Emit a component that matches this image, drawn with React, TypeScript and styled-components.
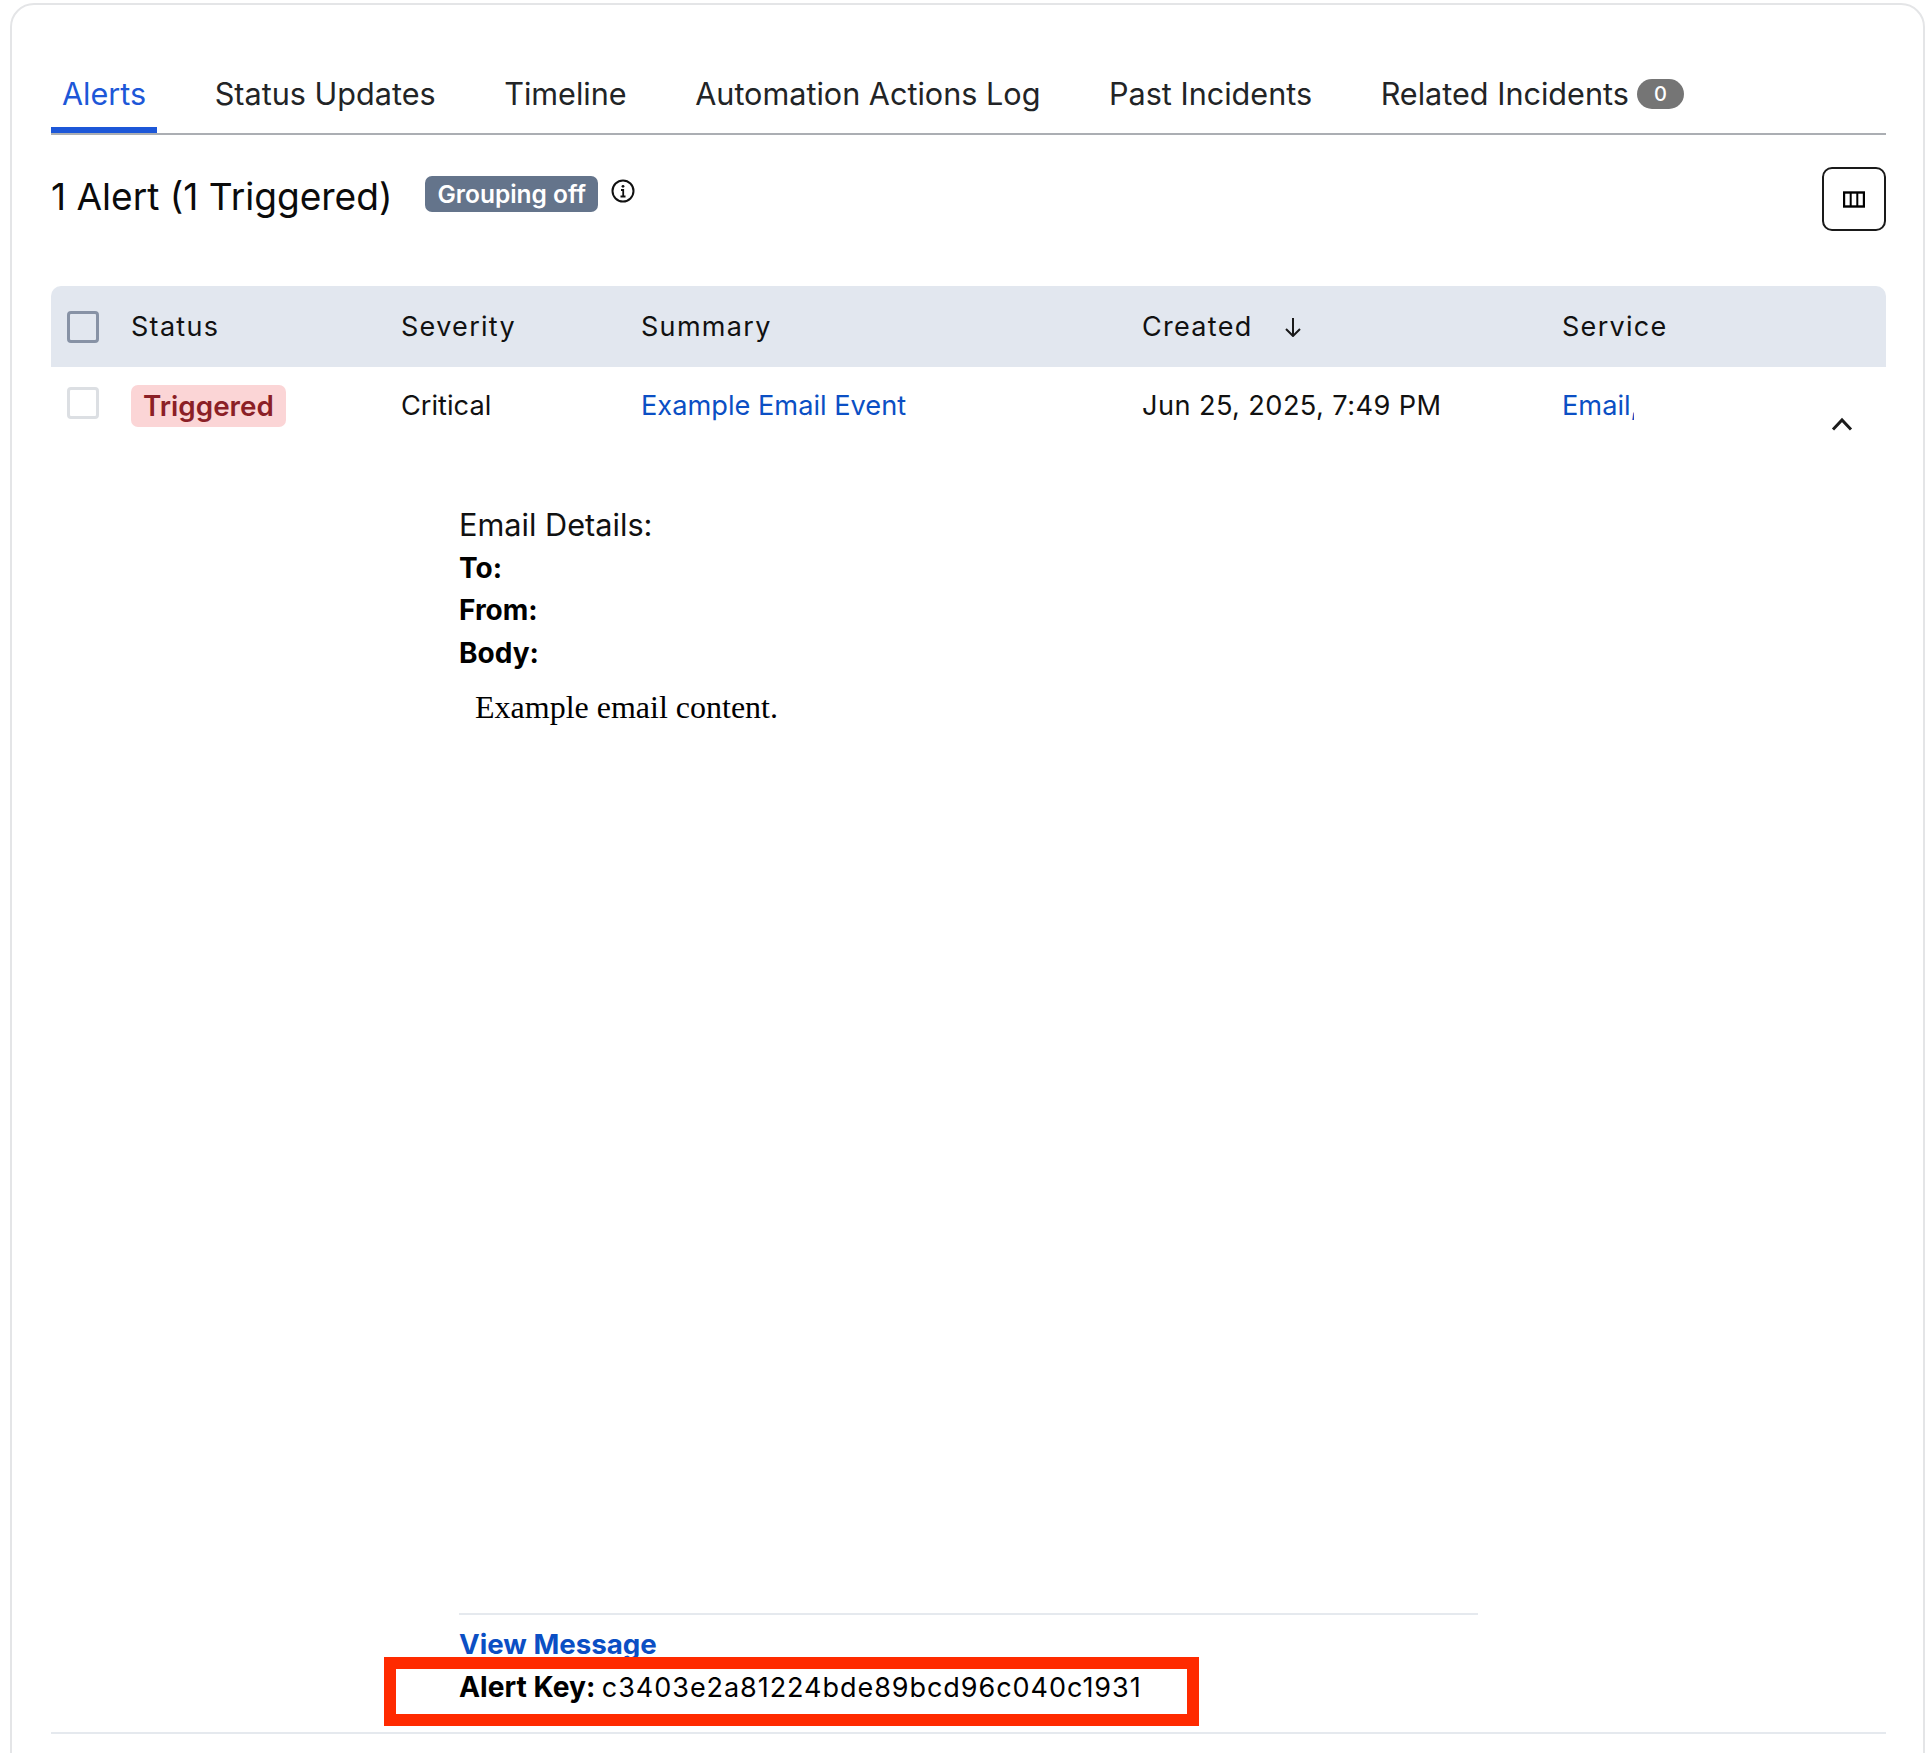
import styled, { createGlobalStyle } from 'styled-components'

const GlobalStyle = createGlobalStyle`
  html, body {
    margin: 0;
    padding: 0;
    background: #ffffff;
    overflow: hidden;
  }
  body {
    font-family: Inter, "Liberation Sans", sans-serif;
    color: #111111;
  }
`

const COLUMNS = '80px 270px 240px 501px 420px 1fr'

const Page = styled.div`
  position: relative;
  height: 1753px;
  padding: 3px 2px 0 10px;
  box-sizing: border-box;
  overflow: hidden;
`

const Card = styled.section`
  box-sizing: border-box;
  height: 1800px;
  padding: 0 37px 0 39px;
  border: 2px solid #e4e5e7;
  border-radius: 24px 24px 0 0;
  background: #ffffff;
`

const TabBar = styled.nav`
  display: flex;
  align-items: flex-end;
  gap: 46.5px;
  height: 128px;
  border-bottom: 2px solid #abaeb3;
`

const Tab = styled.a<{ $active?: boolean }>`
  display: flex;
  align-items: center;
  gap: 8px;
  padding: 0 11px 16px;
  font-size: 30.6px;
  line-height: 34px;
  white-space: nowrap;
  color: ${(p) => (p.$active ? '#1d57d8' : '#222426')};
  border-bottom: ${(p) => (p.$active ? '6px solid #1d57d8' : '6px solid transparent')};
`

const CountBadge = styled.span`
  display: inline-flex;
  align-items: center;
  justify-content: center;
  width: 47px;
  height: 30px;
  border-radius: 15px;
  background: #757575;
  color: #ffffff;
  font-size: 20px;
  font-weight: 500;
`

const TitleRow = styled.div`
  display: flex;
  align-items: flex-start;
  margin-top: 32px;
  height: 63px;
`

const Title = styled.h2`
  margin: 8px 0 0;
  font-size: 37.1px;
  line-height: 44px;
  font-weight: 400;
  color: #0b0b0b;
`

const GroupingBadge = styled.span`
  margin: 9px 0 0 33px;
  padding: 0 12px;
  height: 36px;
  border-radius: 7px;
  background: #64748b;
  color: #ffffff;
  font-size: 24.5px;
  line-height: 36px;
  font-weight: 600;
`

const InfoButton = styled.span`
  display: block;
  margin: 12px 0 0 13px;
  width: 24px;
  height: 24px;
  color: #111111;
`

const ColumnsButton = styled.button`
  margin-left: auto;
  width: 64px;
  height: 64px;
  padding: 0;
  display: flex;
  align-items: center;
  justify-content: center;
  background: #ffffff;
  border: 2px solid #1a1a1a;
  border-radius: 10px;
`

const TableHead = styled.div`
  display: grid;
  grid-template-columns: ${COLUMNS};
  align-items: center;
  margin-top: 56px;
  height: 81px;
  background: #e2e7ef;
  border-radius: 10px 10px 0 0;
`

const HeadCell = styled.div`
  display: flex;
  align-items: center;
  gap: 30px;
  font-size: 27px;
  line-height: 34px;
  letter-spacing: 1.3px;
  color: #111111;
`

const CheckCell = styled.div<{ $row?: boolean }>`
  padding-left: 16px;
  padding-top: ${(p) => (p.$row ? '2px' : '0')};
`

const Checkbox = styled.span<{ $muted?: boolean }>`
  display: block;
  box-sizing: border-box;
  width: 32px;
  height: 32px;
  border-radius: 4px;
  border: 3px solid ${(p) => (p.$muted ? '#dcdfe3' : '#8792a5')};
  background-color: ${(p) => (p.$muted ? '#ffffff' : 'transparent')};
`

const TableRow = styled.div`
  display: grid;
  grid-template-columns: ${COLUMNS};
  align-items: start;
  height: 42px;
  padding-top: 18px;
`

const BodyCell = styled.div<{ $spaced?: boolean }>`
  font-size: 27.2px;
  line-height: 42px;
  letter-spacing: ${(p) => (p.$spaced ? '0.4px' : '0')};
  color: #111111;
`

const StatusBadge = styled.span`
  display: inline-block;
  padding: 0 12px;
  height: 42px;
  border-radius: 7px;
  background: #fbd5d6;
  color: #8b1f26;
  font-size: 27.8px;
  line-height: 42px;
  font-weight: 600;
`

const LinkText = styled.a`
  color: #0b4fc4;
  font-size: 27.2px;
  line-height: 42px;
`

const ServiceCell = styled.div`
  display: flex;
  font-size: 27.2px;
  line-height: 42px;
`

const ClippedComma = styled.span`
  display: inline-block;
  width: 3px;
  overflow: hidden;
  color: #0b4fc4;
`

const Chevron = styled.span`
  display: flex;
  margin-left: auto;
  margin-right: 33px;
  margin-top: 32px;
  width: 22px;
  height: 14px;
  color: #1c1c1c;
`

const Details = styled.div`
  margin-left: 408px;
  width: 1019px;
`

const DetailLines = styled.div`
  height: 1188px;
  padding-top: 77px;
  box-sizing: border-box;
  border-bottom: 2px solid #e5e9ee;
`

const DetailsHeading = styled.div`
  font-size: 30.7px;
  line-height: 42.5px;
  color: #111111;
`

const DetailLabel = styled.div`
  font-size: 28px;
  line-height: 42.5px;
  font-weight: 700;
  color: #000000;
`

const EmailBody = styled.div`
  margin: 12px 0 0 16px;
  font-family: "Liberation Serif", "Times New Roman", serif;
  font-size: 32px;
  line-height: 42px;
  color: #000000;
`

const ViewLink = styled.a`
  display: block;
  margin-top: 11px;
  font-size: 27.7px;
  line-height: 36px;
  font-weight: 700;
  color: #0b4fc4;
`

const AlertKey = styled.div`
  margin-top: 4px;
  font-size: 27px;
  line-height: 42px;
  letter-spacing: 0.95px;
  color: #000000;
  b {
    margin-right: -2px;
    font-size: 28.2px;
    font-weight: 700;
    letter-spacing: 0;
  }
`

const RowEnd = styled.div`
  margin-top: 23px;
  border-top: 2px solid #e5e9ee;
`

const RedBox = styled.div`
  position: absolute;
  left: 384px;
  top: 1657px;
  width: 815px;
  height: 69px;
  box-sizing: border-box;
  border: 12px solid #ff2a00;
`

const InfoIcon = () => (
  <svg viewBox="0 0 24 24" width="24" height="24" fill="none" stroke="currentColor" strokeWidth="2">
    <circle cx="12" cy="12" r="10.5" />
    <path d="M10 11h2.2v6.5M9.5 17.5h5" strokeWidth="1.8" />
    <circle cx="12" cy="7.3" r="1.4" fill="currentColor" stroke="none" />
  </svg>
)

const ColumnsIcon = () => (
  <svg viewBox="0 0 22 17" width="22" height="17" fill="none" stroke="#000000">
    <rect x="1" y="1.5" width="20" height="14" strokeWidth="2.4" />
    <path d="M7.7 1.5v14M14.3 1.5v14" strokeWidth="2" />
  </svg>
)

const SortArrow = () => (
  <svg viewBox="0 0 20 20" width="20" height="20" fill="none" stroke="#1a1a1a" strokeWidth="2">
    <path d="M10 1v18M3 12l7 7 7-7" />
  </svg>
)

const ChevronUp = () => (
  <svg viewBox="0 0 22 14" width="22" height="14" fill="none" stroke="currentColor" strokeWidth="3">
    <path d="M2 12.5L11 3l9 9.5" />
  </svg>
)

export default function App() {
  return (
    <Page>
      <GlobalStyle />
      <Card>
        <TabBar>
          <Tab $active>Alerts</Tab>
          <Tab>Status Updates</Tab>
          <Tab>Timeline</Tab>
          <Tab>Automation Actions Log</Tab>
          <Tab>Past Incidents</Tab>
          <Tab>
            Related Incidents
            <CountBadge>0</CountBadge>
          </Tab>
        </TabBar>

        <TitleRow>
          <Title>1 Alert (1 Triggered)</Title>
          <GroupingBadge>Grouping off</GroupingBadge>
          <InfoButton>
            <InfoIcon />
          </InfoButton>
          <ColumnsButton aria-label="Columns">
            <ColumnsIcon />
          </ColumnsButton>
        </TitleRow>

        <TableHead>
          <CheckCell>
            <Checkbox />
          </CheckCell>
          <HeadCell>Status</HeadCell>
          <HeadCell>Severity</HeadCell>
          <HeadCell>Summary</HeadCell>
          <HeadCell>
            Created
            <SortArrow />
          </HeadCell>
          <HeadCell>Service</HeadCell>
        </TableHead>

        <TableRow>
          <CheckCell $row>
            <Checkbox $muted />
          </CheckCell>
          <BodyCell>
            <StatusBadge>Triggered</StatusBadge>
          </BodyCell>
          <BodyCell>Critical</BodyCell>
          <BodyCell>
            <LinkText>Example Email Event</LinkText>
          </BodyCell>
          <BodyCell $spaced>Jun 25, 2025, 7:49 PM</BodyCell>
          <ServiceCell>
            <LinkText>Email</LinkText>
            <ClippedComma>,</ClippedComma>
            <Chevron>
              <ChevronUp />
            </Chevron>
          </ServiceCell>
        </TableRow>

        <Details>
          <DetailLines>
            <DetailsHeading>Email Details:</DetailsHeading>
            <DetailLabel>To:</DetailLabel>
            <DetailLabel>From:</DetailLabel>
            <DetailLabel>Body:</DetailLabel>
            <EmailBody>Example email content.</EmailBody>
          </DetailLines>
          <ViewLink>View Message</ViewLink>
          <AlertKey>
            <b>Alert Key:</b> c3403e2a81224bde89bcd96c040c1931
          </AlertKey>
        </Details>
        <RowEnd />
      </Card>
      <RedBox />
    </Page>
  )
}
